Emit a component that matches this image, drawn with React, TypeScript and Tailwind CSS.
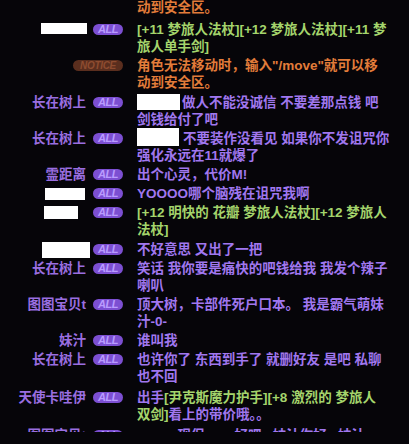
import React from "react";

type Seg = { t: string; c?: "p" | "g" | "o" } | { box: string };
type Row = {
  name?: string;
  nameBox?: string;
  badge: "ALL" | "NOTICE";
  color: "p" | "g" | "o";
  lines: (string | Seg[])[];
  extra?: string;
};

const colors = {
  p: "text-[#a077ef]",
  g: "text-[#a4d46c]",
  o: "text-[#e27c3a]",
};

const rows: Row[] = [
  {
    badge: "NOTICE",
    color: "o",
    lines: ['角色无法移动时，输入"/move"就可以移', "动到安全区。"],
    extra: "mb-[2.8px]",
  },
  {
    nameBox: "w-[46px] h-[11px] mt-[2px] mr-[-1px]",
    badge: "ALL",
    color: "g",
    lines: ["[+11 梦旅人法杖][+12 梦旅人法杖][+11 梦", "旅人单手剑]"],
  },
  {
    badge: "NOTICE",
    color: "o",
    lines: ['角色无法移动时，输入"/move"就可以移', "动到安全区。"],
  },
  {
    name: "长在树上",
    badge: "ALL",
    color: "p",
    lines: [[{ box: "w-[43px] h-[16px] mr-[2px]" }, { t: "做人不能没诚信 不要差那点钱 吧" }], "剑钱给付了吧"],
  },
  {
    name: "长在树上",
    badge: "ALL",
    color: "p",
    lines: [[{ box: "w-[42px] h-[18px] mt-[-2px] mr-[4px]" }, { t: "不要装作没看见 如果你不发诅咒你" }], "强化永远在11就爆了"],
  },
  { name: "霊距离", badge: "ALL", color: "p", lines: ["出个心灵，代价M!"] },
  {
    nameBox: "w-[40px] h-[12px] mt-[3px] mr-[1px]",
    badge: "ALL",
    color: "p",
    lines: ["YOOOO哪个脑残在诅咒我啊"],
  },
  {
    nameBox: "w-[34px] h-[13px] mt-[2px] mr-[8px]",
    badge: "ALL",
    color: "g",
    lines: ["[+12 明快的 花瓣 梦旅人法杖][+12 梦旅人", "法杖]"],
  },
  {
    nameBox: "w-[48px] h-[16px] mt-[1px] mr-[-4px]",
    badge: "ALL",
    color: "p",
    lines: ["不好意思 又出了一把"],
  },
  {
    name: "长在树上",
    badge: "ALL",
    color: "p",
    lines: ["笑话 我你要是痛快的吧钱给我 我发个辣子", "喇叭"],
  },
  {
    name: "图图宝贝t",
    badge: "ALL",
    color: "p",
    lines: ["顶大树，卡部件死户口本。 我是霸气萌妹", "汁-0-"],
  },
  { name: "妹汁", badge: "ALL", color: "p", lines: ["谁叫我"] },
  {
    name: "长在树上",
    badge: "ALL",
    color: "p",
    lines: ["也许你了 东西到手了 就删好友 是吧 私聊", "也不回"],
  },
  {
    name: "天使卡哇伊",
    badge: "ALL",
    color: "p",
    lines: [
      [{ t: "出手" }, { t: "[尹克斯魔力护手][+8 激烈的 梦旅人", c: "g" }],
      [{ t: "双剑]", c: "g" }, { t: "看上的带价哦。。" }],
    ],
    extra: "mt-[1px]",
  },
  {
    name: "图图宝贝t",
    badge: "ALL",
    color: "p",
    lines: ["ー＿ー现保\u00a0\u00a0\u00a0\u00a0\u00a0\u00a0\u00a0\u00a0好吧\u00a0\u00a0\u00a0妹汁你好\u00a0\u00a0\u00a0妹汁"],
    extra: "mt-[2px]",
  },
];

function Badge({ kind }: { kind: "ALL" | "NOTICE" }) {
  if (kind === "NOTICE") {
    return (
      <span className="mt-[3px] flex h-[11px] w-[50px] shrink-0 items-center justify-center rounded-full bg-[#5a2e1e] text-[10px] font-bold italic leading-none tracking-[-0.3px] text-[#8e4c30]">
        NOTICE
      </span>
    );
  }
  return (
    <span className="mt-[3px] flex h-[11px] w-[30px] shrink-0 items-center justify-center rounded-full bg-[#7c4fd2] text-[11px] font-bold italic leading-none tracking-[-0.5px] text-[#b99cff]">
      ALL
    </span>
  );
}

export default function App() {
  return (
    <div
      className="h-[444px] w-[409px] overflow-hidden bg-[#060509]"
      style={{ fontFamily: '"Liberation Sans", "Noto Sans CJK SC", sans-serif' }}
    >
      <div className="h-[432px] overflow-hidden">
        <div className="mt-[-17.7px] flex flex-col gap-[2.2px] text-[13.5px] font-bold leading-[17px]">
          {rows.map((r, i) => (
            <div key={i} className={`flex items-start ${r.extra ?? ""}`}>
              <div className="flex w-[123px] shrink-0 items-start justify-end gap-[7px]">
                {r.name && <span className="whitespace-nowrap text-[#9a6ee0]">{r.name}</span>}
                {r.nameBox && <span className={`block shrink-0 bg-white ${r.nameBox}`} />}
                <Badge kind={r.badge} />
              </div>
              <div className={`ml-[14px] whitespace-nowrap ${colors[r.color]}`}>
                {r.lines.map((ln, j) => (
                  <div key={j} className="flex items-start">
                    {typeof ln === "string"
                      ? ln
                      : ln.map((s, k) =>
                          "box" in s ? (
                            <span key={k} className={`block shrink-0 bg-white ${s.box}`} />
                          ) : (
                            <span key={k} className={s.c ? colors[s.c] : ""}>
                              {s.t}
                            </span>
                          )
                        )}
                  </div>
                ))}
              </div>
            </div>
          ))}
        </div>
      </div>
    </div>
  );
}
